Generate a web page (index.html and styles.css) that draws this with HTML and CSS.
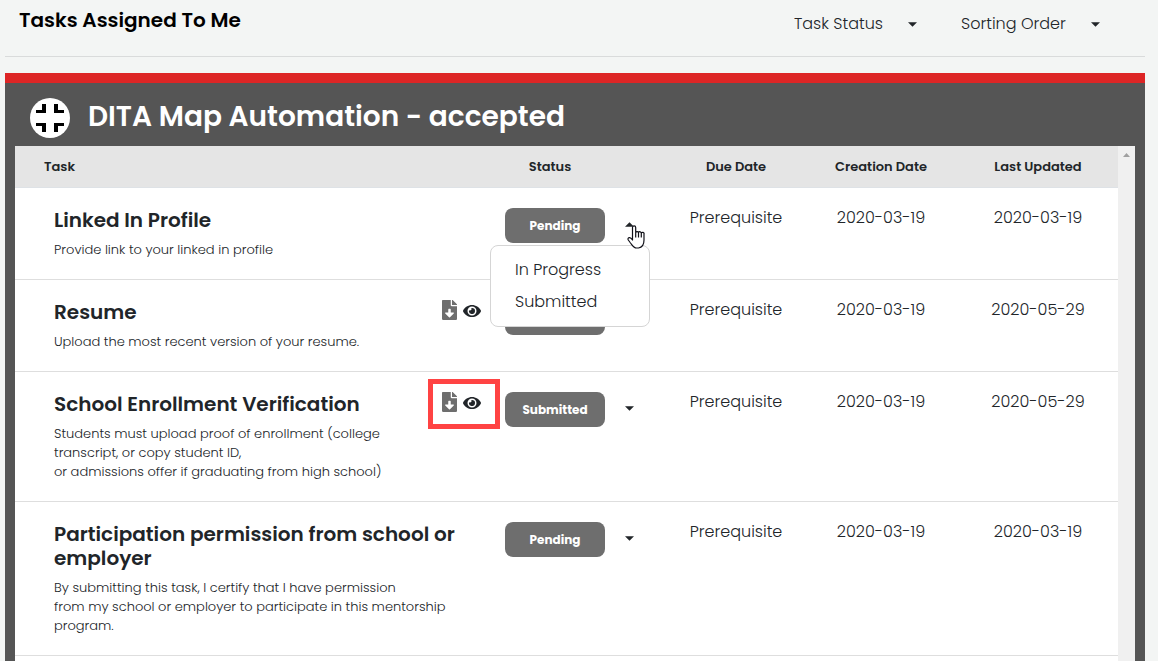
FILE: index.html
```html
<!DOCTYPE html>
<html lang="en">
<head>
<meta charset="utf-8">
<meta name="viewport" content="width=device-width, initial-scale=1">
<title>Tasks Assigned To Me</title>
<link rel="stylesheet" href="styles.css">
</head>
<body>
<svg class="sprite" aria-hidden="true">
  <symbol id="file" viewBox="0 0 384 512"><path d="M224 136V0H24C10.7 0 0 10.7 0 24v464c0 13.3 10.7 24 24 24h336c13.3 0 24-10.7 24-24V160H248c-13.2 0-24-10.8-24-24zm76.45 211.36l-96.42 95.7c-6.65 6.61-17.39 6.61-24.04 0l-96.42-95.7C73.42 337.29 80.54 320 94.82 320H160v-80c0-8.84 7.16-16 16-16h32c8.84 0 16 7.16 16 16v80h65.18c14.28 0 21.4 17.29 11.27 27.36zM377 105L279.1 7c-4.5-4.5-10.6-7-17-7H256v128h128v-6.1c0-6.3-2.5-12.4-7-16.9z"/></symbol>
  <symbol id="eye" viewBox="0 0 576 512"><path d="M572.52 241.4C518.29 135.59 410.93 64 288 64S57.68 135.64 3.48 241.41a32.35 32.35 0 0 0 0 29.19C57.71 376.41 165.07 448 288 448s230.32-71.64 284.52-177.41a32.35 32.35 0 0 0 0-29.19zM288 400a144 144 0 1 1 144-144 143.93 143.93 0 0 1-144 144zm0-240a95.31 95.31 0 0 0-25.31 3.79 47.85 47.85 0 0 1-66.9 66.9A95.78 95.78 0 1 0 288 160z"/></symbol>
  <symbol id="down" viewBox="0 0 10 5"><path d="M0 0h10L5 5z"/></symbol>
  <symbol id="up" viewBox="0 0 10 5"><path d="M0 5h10L5 0z"/></symbol>
</svg>
<header class="topbar">
  <h1 class="page-title">Tasks Assigned To Me</h1>
  <div class="filters">
    <label class="filter"><select class="filter-select" aria-label="Task Status"><option>Task Status</option></select><svg class="caret"><use href="#down"/></svg></label>
    <label class="filter"><select class="filter-select" aria-label="Sorting Order"><option>Sorting Order</option></select><svg class="caret"><use href="#down"/></svg></label>
  </div>
</header>
<main class="panel">
  <div class="panel-head">
    <button class="collapse" aria-label="Collapse project">
      <svg class="collapse-icon" viewBox="0 0 40 40"><path d="M12 6h4v9H6v-3h6zM24 6h4v6h6v3H24zM6 25h10v9h-4v-6H6zM24 25h10v3h-6v6h-4z"/></svg>
    </button>
    <h2 class="panel-title">DITA Map Automation - accepted</h2>
  </div>
  <div class="panel-body">
    <table class="tasks">
      <thead>
        <tr><th class="col-task">Task</th><th class="col-status">Status</th><th class="col-due">Due Date</th><th class="col-created">Creation Date</th><th class="col-updated">Last Updated</th></tr>
      </thead>
      <tbody>
        <tr>
          <td class="task"><div class="task-row"><div class="task-text"><h3 class="task-name">Linked In Profile</h3><p class="task-desc">Provide link to your linked in profile</p></div></div></td>
          <td class="status">
            <div class="status-row">
              <button class="pill">Pending</button>
              <button class="toggle" aria-label="Change status" aria-expanded="true"><svg class="caret"><use href="#up"/></svg></button>
            </div>
            <div class="menu" role="menu"><button class="menu-item" role="menuitem">In Progress</button><button class="menu-item" role="menuitem">Submitted</button></div>
            <svg class="pointer" viewBox="0 0 18 24" aria-hidden="true"><path d="M5.5 14.500V2.500a1.600 1.600 0 0 1 3.200 0V7.500a1.500 1.500 0 0 1 2.800 0a1.500 1.500 0 0 1 2.800.8a1.400 1.400 0 0 1 2.700.8v6c0 3.500-1.500 7.400-5.500 7.900h-2C6.800 23 5.500 20.500 3.500 18L1.300 15c-.7-1.300 0-2.500 1.300-2.300 1.200.2 2 1.100 2.900 2.300zM8.700 7.500v5M11.500 8v4.500M14.300 8.500v4"/></svg>
          </td>
          <td>Prerequisite</td><td>2020-03-19</td><td>2020-03-19</td>
        </tr>
        <tr>
          <td class="task"><div class="task-row"><div class="task-text"><h3 class="task-name">Resume</h3><p class="task-desc">Upload the most recent version of your resume.</p></div>
            <div class="files"><button class="file-btn" aria-label="Download"><svg class="file-icon"><use href="#file"/></svg></button><button class="file-btn" aria-label="View"><svg class="eye-icon"><use href="#eye"/></svg></button></div></div></td>
          <td class="status"><div class="status-row"><button class="pill" aria-label="Status"></button><button class="toggle" aria-label="Change status"><svg class="caret"><use href="#down"/></svg></button></div></td>
          <td>Prerequisite</td><td>2020-03-19</td><td>2020-05-29</td>
        </tr>
        <tr>
          <td class="task"><div class="task-row"><div class="task-text"><h3 class="task-name">School Enrollment Verification</h3><p class="task-desc">Students must upload proof of enrollment (college<br>transcript, or copy student ID,<br>or admissions offer if graduating from high school)</p></div>
            <div class="files marked"><button class="file-btn" aria-label="Download"><svg class="file-icon"><use href="#file"/></svg></button><button class="file-btn" aria-label="View"><svg class="eye-icon"><use href="#eye"/></svg></button></div></div></td>
          <td class="status"><div class="status-row"><button class="pill">Submitted</button><button class="toggle" aria-label="Change status"><svg class="caret"><use href="#down"/></svg></button></div></td>
          <td>Prerequisite</td><td>2020-03-19</td><td>2020-05-29</td>
        </tr>
        <tr>
          <td class="task"><div class="task-row"><div class="task-text"><h3 class="task-name">Participation permission from school or<br>employer</h3><p class="task-desc">By submitting this task, I certify that I have permission<br>from my school or employer to participate in this mentorship<br>program.</p></div></div></td>
          <td class="status"><div class="status-row"><button class="pill">Pending</button><button class="toggle" aria-label="Change status"><svg class="caret"><use href="#down"/></svg></button></div></td>
          <td>Prerequisite</td><td>2020-03-19</td><td>2020-03-19</td>
        </tr>
      </tbody>
    </table>
    <div class="scrollbar"><svg class="scroll-arrow" viewBox="0 0 7 4"><path d="M0 4h7L3.500 0z"/></svg></div>
  </div>
</main>
</body>
</html>
```

FILE: styles.css
```css
*, *::after { box-sizing: border-box; }
body {
  margin: 0;
  min-height: 100vh;
  padding: 0 13px 0 5px;
  display: flex;
  flex-direction: column;
  background: #f3f5f4;
  color: #212529;
  font-family: Poppins, Inter, "Open Sans", sans-serif;
  font-size: 16px;
  font-weight: 300;
}
h1, h2, h3, p { margin: 0; }
button {
  padding: 0;
  border: 0;
  background: none;
  color: inherit;
  font: inherit;
  cursor: pointer;
}
svg { display: block; fill: currentColor; }
.sprite { position: absolute; width: 0; height: 0; }
.caret { width: 9px; height: 5px; }

.topbar {
  display: flex;
  justify-content: space-between;
  align-items: flex-start;
  height: 57px;
  padding: 8px 45px 0 14px;
  border-bottom: 1px solid #d9dbdb;
}
.page-title { color: #000; font-size: 20px; line-height: 24px; font-weight: 600; }
.filters { display: flex; gap: 44px; padding-top: 4px; }
.filter { display: flex; align-items: center; gap: 25px; }
.filter-select {
  appearance: none;
  margin: 0;
  padding: 0;
  border: 0;
  background: none;
  color: inherit;
  font: inherit;
  line-height: 24px;
}

.panel {
  flex: 1;
  display: flex;
  flex-direction: column;
  margin-top: 16px;
  padding: 0 10px;
  border-top: 10px solid #dd2525;
  background: #555;
}
.panel-head { display: flex; gap: 18px; height: 63px; padding: 15px 15px 0; }
.collapse { width: 40px; height: 40px; border-radius: 50%; background: #fff; color: #000; }
.collapse-icon { width: 40px; height: 40px; }
.panel-title { color: #fff; font-size: 28px; line-height: 38px; font-weight: 600; }
.panel-body { flex: 1; display: flex; align-items: stretch; background: #fff; }

.tasks {
  flex: 1;
  align-self: flex-start;
  table-layout: fixed;
  border-collapse: separate;
  border-spacing: 0;
}
th {
  height: 42px;
  padding: 0;
  background: #e5e5e5;
  border-bottom: 1px solid #dee2e6;
  font-size: 13px;
  line-height: 20px;
  font-weight: 600;
  text-align: center;
}
.col-task { padding-left: 29px; text-align: left; }
.col-status { width: 178px; padding-right: 58px; }
.col-due { width: 136px; }
.col-created { width: 154px; }
.col-updated { width: 160px; }
td {
  padding: 20px 0;
  border-bottom: 1px solid #dedede;
  line-height: 20px;
  text-align: center;
  vertical-align: top;
}
.task { padding-left: 39px; text-align: left; }
.task-row { display: flex; justify-content: space-between; }
.task-text { white-space: nowrap; }
.task-name { font-size: 20px; line-height: 24px; font-weight: 600; }
.task-desc { margin-top: 8px; font-size: 13px; line-height: 19px; }

.files { position: relative; display: flex; align-items: flex-start; gap: 6px; padding-right: 9px; }
.file-btn { display: flex; align-items: flex-end; height: 20px; }
.file-icon { width: 15px; height: 20px; color: #6e6e6e; }
.eye-icon { width: 18px; height: 18px; }
.marked::after {
  content: "";
  position: absolute;
  top: -13px;
  right: -10px;
  width: 72px;
  height: 50px;
  border: 5px solid #ff4343;
}

.status { position: relative; padding-left: 15px; }
.status-row { display: flex; align-items: flex-start; gap: 20px; }
.pill {
  width: 100px;
  height: 35px;
  border-radius: 8px;
  background: #6e6e6e;
  color: #fff;
  font-size: 12px;
  font-weight: 700;
}
.toggle { display: flex; align-items: center; height: 33px; }
.menu {
  position: absolute;
  z-index: 2;
  top: 57px;
  left: 0;
  width: 160px;
  padding: 8px 0;
  border: 1px solid #d5d5d5;
  border-radius: 8px;
  background: #fff;
}
.menu-item { display: block; width: 100%; height: 32px; padding-left: 24px; text-align: left; }
.pointer {
  position: absolute;
  z-index: 3;
  top: 37px;
  left: 137px;
  width: 18px;
  height: 24px;
  fill: #fff;
  stroke: #101018;
  stroke-width: 1.2;
  stroke-linejoin: round;
}
.scrollbar { width: 17px; padding-top: 7px; background: #f0f0f0; }
.scroll-arrow { width: 7px; height: 4px; margin: 0 auto; color: #a0a0a0; }
```
